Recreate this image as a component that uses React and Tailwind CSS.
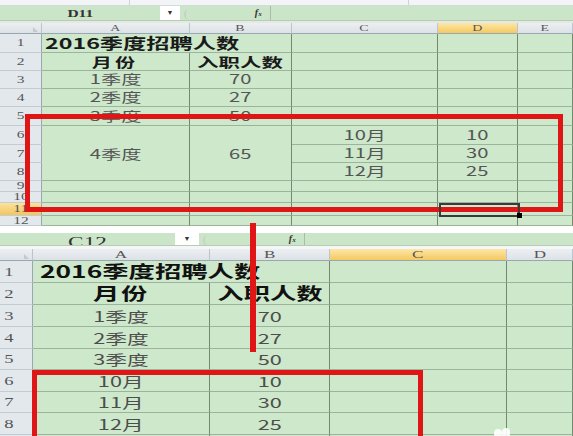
import React from 'react';

// ─── shared cell pieces ─────────────────────────────────────────────────────

const CJK = "font-['Noto_Sans_CJK_SC','Noto_Sans',sans-serif]";
const SERIF = "font-['Liberation_Serif','DejaVu_Serif',serif]";

function T({ children, className = '' }) {
  return (
    <span className={`inline-block whitespace-nowrap scale-x-[1.55] ${className}`}>{children}</span>
  );
}

function Cell({ children, className = '', left = false, middle = false }) {
  return (
    <div
      className={`flex overflow-hidden bg-[#cde8cb] border-b border-b-[#9db39b] border-r border-r-[#72886f] ${
        middle ? 'items-center' : 'items-end'
      } ${left ? 'justify-start' : 'justify-center'} ${className}`}
    >
      {children}
    </div>
  );
}

function RowHead({ n, active = false, size = 'text-[10px]', className = '' }) {
  return (
    <div
      className={`flex items-center overflow-hidden border-b border-b-[#c3cbd3] border-r border-r-[#9aa6b2] ${SERIF} ${size} leading-none text-[#555] ${
        active ? 'bg-linear-to-b from-[#fbe29b] to-[#f3c562]' : 'bg-[#e3e8ed]'
      } ${className}`}
    >
      <T>{n}</T>
    </div>
  );
}

function ColHead({ label, active = false, size = 'text-[9px]', corner = false }) {
  return (
    <div
      className={`flex items-center justify-center overflow-hidden border-b border-b-[#9aa6b2] border-r border-r-[#bcc5ce] ${SERIF} ${size} leading-none text-[#555] ${
        active ? 'bg-linear-to-b from-[#fce7a6] to-[#f4c95e]' : 'bg-linear-to-b from-[#eceff2] to-[#dde2e7]'
      }`}
    >
      {corner ? <span className="mt-auto mb-[1px] ml-auto mr-[3px] h-0 w-0 border-l-[5px] border-t-[5px] border-l-transparent border-t-[#c3c9cf] rotate-180" /> : <T>{label}</T>}
    </div>
  );
}

// ─── formula bar ────────────────────────────────────────────────────────────

function FormulaBar({ name, nameW, arrowW, fxGap, h, big = false }) {
  return (
    <div className={`flex ${h} items-stretch bg-[#cbe5c8] border-b border-b-[#b6cdb3]`}>
      <div
        style={{ width: nameW }}
        className={`flex overflow-hidden ${SERIF} ${
          big ? 'items-end justify-center text-[15px] leading-none' : 'items-center justify-center text-[10px] font-bold'
        } text-[#333]`}
      >
        <T className={big ? 'translate-y-[5px]' : ''}>{name}</T>
      </div>
      <div style={{ width: arrowW }} className="flex items-center justify-center bg-white text-[7px] text-[#333]">
        ▼
      </div>
      <div className={`flex items-center pl-[4px] ${SERIF} text-[11px] text-[#c5c5c5]`}>(</div>
      <div style={{ width: fxGap }} className="flex items-center justify-end pr-[8px] border-r border-r-[#a8bca6]">
        <span className={`${SERIF} italic font-bold text-[10px] leading-none text-[#333]`}>
          f<span className="text-[7px]">x</span>
        </span>
      </div>
      <div className="flex-1" />
    </div>
  );
}

// ─── upper screenshot ──────────────────────────────────────────────────────

function TopSheet() {
  const d = `text-[13px] leading-none text-[#555] ${CJK}`;
  const b = `text-[13px] font-bold leading-none text-[#1a1a1a] ${CJK}`;
  return (
    <div className="grid grid-cols-[42px_148px_102px_146px_80px_1fr] grid-rows-[11px_19px_18px_18px_18px_19px_19px_18px_18px_11px_11px_13px_10px]">
      <ColHead corner />
      <ColHead label="A" />
      <ColHead label="B" />
      <ColHead label="C" />
      <ColHead label="D" active />
      <ColHead label="E" />

      <RowHead n="1" className="justify-center" />
      <Cell left className="col-span-2 pl-[3px] pb-[2px]">
        <T className={`origin-left scale-x-[1.4] text-[15px] font-bold leading-none text-[#1a1a1a] ${CJK}`}>2016季度招聘人数</T>
      </Cell>
      <Cell /><Cell /><Cell />

      <RowHead n="2" className="justify-center" />
      <Cell className="pb-[2px]"><T className={`${b} scale-x-[1.6] tracking-[2px]`}>月份</T></Cell>
      <Cell className="pb-[2px]"><T className={`${b} scale-x-[1.65]`}>入职人数</T></Cell>
      <Cell /><Cell /><Cell />

      {[['3', '1季度', '70'], ['4', '2季度', '27'], ['5', '3季度', '50']].map(([n, q, v]) => (
        <React.Fragment key={n}>
          <RowHead n={n} className="justify-center" />
          <Cell className="pb-[3px]"><T className={d}>{q}</T></Cell>
          <Cell className="pb-[3px]"><T className={d}>{v}</T></Cell>
          <Cell /><Cell /><Cell />
        </React.Fragment>
      ))}

      <RowHead n="6" className="justify-center" />
      <Cell middle className="row-span-3"><T className={`${d} scale-x-[1.6]`}>4季度</T></Cell>
      <Cell middle className="row-span-3"><T className={d}>65</T></Cell>
      <Cell className="pb-[3px]"><T className={d}>10月</T></Cell>
      <Cell className="pb-[3px]"><T className={d}>10</T></Cell>
      <Cell />

      <RowHead n="7" className="justify-center" />
      <Cell className="pb-[3px]"><T className={d}>11月</T></Cell>
      <Cell className="pb-[3px]"><T className={d}>30</T></Cell>
      <Cell />

      <RowHead n="8" className="justify-center" />
      <Cell className="pb-[3px]"><T className={d}>12月</T></Cell>
      <Cell className="pb-[3px]"><T className={d}>25</T></Cell>
      <Cell />

      {['9', '10', '11', '12'].map((n) => (
        <React.Fragment key={n}>
          <RowHead n={n} active={n === '11'} className="justify-center" />
          <Cell /><Cell /><Cell /><Cell /><Cell />
        </React.Fragment>
      ))}
    </div>
  );
}

// ─── lower screenshot ──────────────────────────────────────────────────────

function BottomSheet() {
  const d = `text-[14px] leading-none text-[#4d4d4d] ${CJK}`;
  const b = `text-[17px] font-bold leading-none text-[#111] ${CJK}`;
  const rows = [
    ['3', '1季度', '70'],
    ['4', '2季度', '27'],
    ['5', '3季度', '50'],
    ['6', '10月', '10'],
    ['7', '11月', '30'],
    ['8', '12月', '25'],
  ];
  return (
    <div className="grid grid-cols-[33px_177px_120px_177px_1fr] grid-rows-[12px_22px_22px_22px_22px_21px_22px_21px_22px_22px]">
      <ColHead corner size="text-[11px]" />
      <ColHead label="A" size="text-[11px]" />
      <ColHead label="B" size="text-[11px]" />
      <ColHead label="C" size="text-[11px]" active />
      <ColHead label="D" size="text-[11px]" />

      <RowHead n="1" size="text-[12px]" className="pl-[6px]" />
      <Cell left className="col-span-2 pl-[7px] pb-[3px]">
        <T className={`origin-left scale-x-[1.6] ${b}`}>2016季度招聘人数</T>
      </Cell>
      <Cell /><Cell />

      <RowHead n="2" size="text-[12px]" className="pl-[6px]" />
      <Cell className="pb-[3px]"><T className={`${b} tracking-[1px]`}>月份</T></Cell>
      <Cell className="pb-[3px]"><T className={b}>入职人数</T></Cell>
      <Cell /><Cell />

      {rows.map(([n, q, v]) => (
        <React.Fragment key={n}>
          <RowHead n={n} size="text-[12px]" className="pl-[6px]" />
          <Cell className="pb-[3px]"><T className={d}>{q}</T></Cell>
          <Cell className="pb-[3px]"><T className={d}>{v}</T></Cell>
          <Cell /><Cell />
        </React.Fragment>
      ))}

      <RowHead n="9" size="text-[12px]" className="pl-[6px]" />
      <Cell /><Cell /><Cell /><Cell />
    </div>
  );
}

// ─── page ───────────────────────────────────────────────────────────────────

export default function App() {
  return (
    <div className="relative h-[436px] w-[573px] overflow-hidden bg-white">
      {/* window strip above the first sheet */}
      <div className="flex h-[6px] bg-[#f3f4f5] border-b border-b-[#d4d9de]">
        <div className="w-[130px] border-r border-r-[#d0d4d8]" />
        <div className="w-[279px] border-r border-r-[#d0d4d8]" />
      </div>

      <FormulaBar name="D11" nameW={160} arrowW={20} fxGap={83} h="h-[15px]" />
      <div className="h-[2px] bg-[#e4e9e4]" />
      <TopSheet />

      <div className="h-[7px] bg-white" />
      <FormulaBar name="C12" nameW={175} arrowW={24} fxGap={98} h="h-[13px]" big />
      <div className="h-[3px] bg-[#f5f6f7]" />
      <BottomSheet />

      {/* markup drawn over the screenshots */}
      <div className="absolute left-[25px] top-[114px] h-[98px] w-[538px] border-[5px] border-[#e01515]" />
      <div className="absolute left-[439px] top-[203px] h-[14px] w-[81px] border-2 border-[#3a3a3a]" />
      <div className="absolute left-[517px] top-[213px] h-[5px] w-[5px] bg-black" />
      <div className="absolute left-[250px] top-[223px] h-[129px] w-[6px] bg-[#e01515]" />
      <div className="absolute left-[32px] top-[370px] h-[90px] w-[391px] border-[5px] border-[#e01515]" />
      <div className="absolute left-[494px] top-[429px] h-[9px] w-[8px] rounded-full bg-white/90" />
      <div className="absolute left-[502px] top-[428px] h-[10px] w-[8px] rounded-full bg-white/90" />
    </div>
  );
}
